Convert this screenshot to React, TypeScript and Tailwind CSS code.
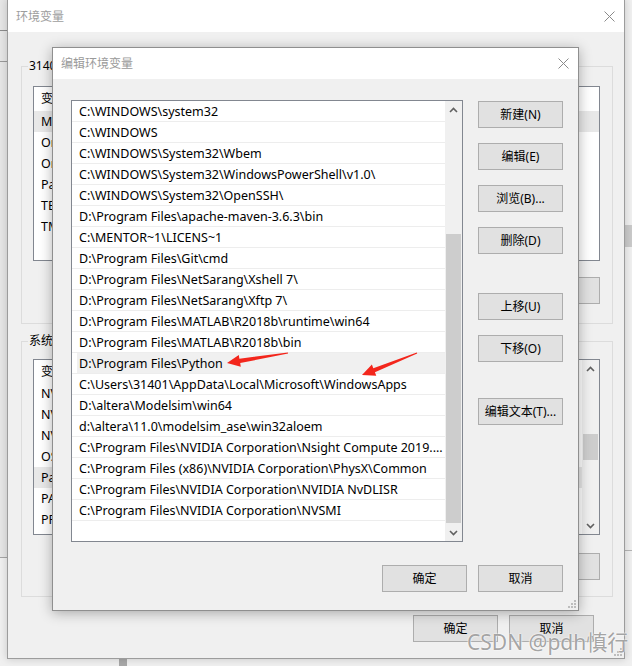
import React from "react";

const paths = [
  "C:\\WINDOWS\\system32",
  "C:\\WINDOWS",
  "C:\\WINDOWS\\System32\\Wbem",
  "C:\\WINDOWS\\System32\\WindowsPowerShell\\v1.0\\",
  "C:\\WINDOWS\\System32\\OpenSSH\\",
  "D:\\Program Files\\apache-maven-3.6.3\\bin",
  "C:\\MENTOR~1\\LICENS~1",
  "D:\\Program Files\\Git\\cmd",
  "D:\\Program Files\\NetSarang\\Xshell 7\\",
  "D:\\Program Files\\NetSarang\\Xftp 7\\",
  "D:\\Program Files\\MATLAB\\R2018b\\runtime\\win64",
  "D:\\Program Files\\MATLAB\\R2018b\\bin",
  "D:\\Program Files\\Python",
  "C:\\Users\\31401\\AppData\\Local\\Microsoft\\WindowsApps",
  "D:\\altera\\Modelsim\\win64",
  "d:\\altera\\11.0\\modelsim_ase\\win32aloem",
  "C:\\Program Files\\NVIDIA Corporation\\Nsight Compute 2019....",
  "C:\\Program Files (x86)\\NVIDIA Corporation\\PhysX\\Common",
  "C:\\Program Files\\NVIDIA Corporation\\NVIDIA NvDLISR",
  "C:\\Program Files\\NVIDIA Corporation\\NVSMI",
];

const userVars = [
  ["MOZ_PLUGIN_PATH", "D:\\Program Files\\Foxit Software\\plugins\\"],
  ["OneDrive", "C:\\Users\\31401\\OneDrive"],
  ["OneDriveConsumer", "C:\\Users\\31401\\OneDrive"],
  ["Path", "C:\\Users\\31401\\AppData\\Local\\Microsoft\\WindowsApps"],
  ["TEMP", "C:\\Users\\31401\\AppData\\Local\\Temp"],
  ["TMP", "C:\\Users\\31401\\AppData\\Local\\Temp"],
];

const sysVars = [
  ["NVCUDASAMPLES_ROOT", "C:\\ProgramData\\NVIDIA Corporation\\CUDA Samples"],
  ["NVCUDASAMPLES11_0_ROOT", "C:\\ProgramData\\NVIDIA Corporation\\CUDA Samples"],
  ["NVTOOLSEXT_PATH", "C:\\Program Files\\NVIDIA Corporation\\NvToolsExt\\"],
  ["OS", "Windows_NT"],
  ["Path", "C:\\WINDOWS\\system32;C:\\WINDOWS;"],
  ["PATHEXT", ".COM;.EXE;.BAT;.CMD;.VBS;.VBE;.JS"],
  ["PROCESSOR_ARCHITECTURE", "AMD64"],
];

function WinButton({ children, className = "" }: { children: React.ReactNode; className?: string }) {
  return (
    <div
      className={`h-[27px] w-[85px] shrink-0 flex items-center justify-center border border-[#adadad] bg-[#e1e1e1] ${className}`}
    >
      {children}
    </div>
  );
}

function CloseX() {
  return (
    <svg width="11" height="11" viewBox="0 0 11 11">
      <path d="M0.5 0.5 L10.5 10.5 M10.5 0.5 L0.5 10.5" stroke="#8a8a8a" strokeWidth="1" fill="none" />
    </svg>
  );
}

function Chevron({ up }: { up?: boolean }) {
  return (
    <svg width="9" height="6" viewBox="0 0 9 6">
      <polyline
        points={up ? "1,5 4.5,1.5 8,5" : "1,1 4.5,4.5 8,1"}
        fill="none"
        stroke="#606060"
        strokeWidth="1.6"
      />
    </svg>
  );
}

function Grip() {
  const dots = [
    [6, 0],
    [3, 3],
    [6, 3],
    [0, 6],
    [3, 6],
    [6, 6],
  ];
  return (
    <svg width="8" height="8">
      {dots.map(([x, y]) => (
        <rect key={`${x}-${y}`} x={x} y={y} width="2" height="2" fill="#bdbdbd" />
      ))}
    </svg>
  );
}

function Group({ label, children, className = "" }: { label: string; children: React.ReactNode; className?: string }) {
  return (
    <div className={`relative w-[592px] border border-[#dcdcdc] ${className}`}>
      <span className="absolute left-[6px] top-[-9px] bg-[#f0f0f0] px-[1px] leading-[16px]">{label}</span>
      {children}
    </div>
  );
}

function VarList({
  rows,
  selected,
  headerH,
  scroll,
  className = "",
}: {
  rows: string[][];
  selected: number;
  headerH: string;
  scroll?: boolean;
  className?: string;
}) {
  return (
    <div className={`ml-[11px] w-[567px] flex border border-[#828790] bg-white ${className}`}>
      <div className="flex-1 flex flex-col overflow-hidden">
        <div className={`${headerH} shrink-0 flex items-center`}>
          <span className="w-[160px] pl-[7px]">变量</span>
          <span className="pl-[7px]">值</span>
        </div>
        {rows.map(([k, v], i) => (
          <div
            key={k}
            className={`h-[21px] shrink-0 flex items-center pt-[2px] whitespace-nowrap text-[12.5px] ${
              i === selected ? "bg-[#e8e8e8]" : ""
            }`}
          >
            <span className="w-[160px] pl-[7px] overflow-hidden">{k}</span>
            <span className="pl-[7px]">{v}</span>
          </div>
        ))}
      </div>
      {scroll && (
        <div className="w-[17px] shrink-0 flex flex-col bg-[#f0f0f0]">
          <div className="h-[17px] flex items-center justify-center">
            <Chevron up />
          </div>
          <div className="flex-1 px-[1px]">
            <div className="mt-[57px] h-[26px] bg-[#cdcdcd]" />
          </div>
          <div className="h-[17px] flex items-center justify-center">
            <Chevron />
          </div>
        </div>
      )}
    </div>
  );
}

export default function App() {
  return (
    <div className="relative w-[632px] h-[666px] overflow-hidden bg-[#f0f0f0] font-['Noto_Sans','Noto_Sans_CJK_SC',sans-serif] text-[12px] text-black">
      {/* bits of other windows behind */}
      <div className="absolute left-0 top-0 w-[8px] h-[558px] bg-[#e6e6e6] border-b border-[#a5a5a5]">
        <div className="mt-[30px] h-px bg-[#8c8c8c]" />
        <div className="mt-[30px] h-px bg-[#9a9a9a]" />
      </div>
      <div className="absolute right-0 top-[225px] w-[8px] h-[22px] bg-[#cacaca]" />
      <div className="absolute right-0 top-[550px] w-[8px] h-px bg-[#b5b5b5]" />
      <div className="absolute left-[119px] bottom-0 w-[8px] h-[8px] bg-[#a8a8a8]" />

      {/* 环境变量 window */}
      <div className="absolute left-[7px] top-[-1px] w-[618px] h-[660px] border border-[#9c9c9c] bg-[#f0f0f0] shadow-[0_0_8px_rgba(0,0,0,0.18)] flex flex-col">
        <div className="h-[32px] shrink-0 bg-white flex items-center justify-between pl-[8px] pr-[9px] pt-[1px]">
          <span className="text-[#9d9d9d]">环境变量</span>
          <CloseX />
        </div>
        <div className="flex flex-col pl-[13px]">
          <Group label="31401 的用户变量(U)" className="mt-[34px] pb-[19px]">
            <VarList rows={userVars} selected={0} headerH="h-[24px]" className="mt-[19px] h-[175px]" />
            <div className="mt-[16px] flex justify-end gap-[10px] pr-[12px]">
              <WinButton>新建(N)...</WinButton>
              <WinButton>编辑(E)...</WinButton>
              <WinButton>删除(D)</WinButton>
            </div>
          </Group>
          <Group label="系统变量(S)" className="mt-[17px] pb-[16px]">
            <VarList rows={sysVars} selected={4} headerH="h-[23px]" scroll className="mt-[17px] h-[176px]" />
            <div className="mt-[18px] flex justify-end gap-[10px] pr-[12px]">
              <WinButton>新建(W)...</WinButton>
              <WinButton>编辑(I)...</WinButton>
              <WinButton>删除(L)</WinButton>
            </div>
          </Group>
        </div>
        <div className="mt-[18px] flex justify-end gap-[11px] pr-[30px]">
          <WinButton>确定</WinButton>
          <WinButton>取消</WinButton>
        </div>
        <div className="absolute right-[2px] bottom-[2px]">
          <Grip />
        </div>
      </div>

      {/* 编辑环境变量 dialog */}
      <div className="absolute left-[52px] top-[47px] w-[527px] h-[564px] border border-[#8f8f8f] bg-[#f0f0f0] shadow-[0_2px_12px_rgba(0,0,0,0.3)] flex flex-col">
        <div className="h-[31px] shrink-0 bg-white flex items-center justify-between pl-[8px] pr-[9px]">
          <span className="text-[#9a9a9a]">编辑环境变量</span>
          <CloseX />
        </div>
        <div className="flex flex-col pl-[18px] pr-[15px] pt-[21px]">
          <div className="flex gap-[15px]">
            <div className="w-[392px] h-[442px] flex border border-[#828790] bg-white">
              <div className="flex-1 flex flex-col overflow-hidden">
                {paths.map((p, i) => (
                  <div key={p} className="h-[21px] shrink-0 flex border-b border-[#ededed]">
                    <div
                      className={`ml-[5px] flex-1 pl-[2px] pt-[3px] flex items-center whitespace-nowrap overflow-hidden text-[12.5px] ${
                        i === 12 ? "bg-[#f0f0f0]" : ""
                      }`}
                    >
                      {p}
                    </div>
                  </div>
                ))}
              </div>
              <div className="w-[17px] shrink-0 flex flex-col bg-[#f0f0f0]">
                <div className="h-[17px] flex items-center justify-center">
                  <Chevron up />
                </div>
                <div className="flex-1 px-[1px]">
                  <div className="mt-[116px] h-[289px] bg-[#cdcdcd]" />
                </div>
                <div className="h-[17px] flex items-center justify-center">
                  <Chevron />
                </div>
              </div>
            </div>
            <div className="flex flex-col pt-[1px]">
              <WinButton>新建(N)</WinButton>
              <WinButton className="mt-[15px]">编辑(E)</WinButton>
              <WinButton className="mt-[15px]">浏览(B)...</WinButton>
              <WinButton className="mt-[15px]">删除(D)</WinButton>
              <WinButton className="mt-[39px]">上移(U)</WinButton>
              <WinButton className="mt-[15px]">下移(O)</WinButton>
              <WinButton className="mt-[36px]">编辑文本(T)...</WinButton>
            </div>
          </div>
          <div className="mt-[23px] flex justify-end gap-[11px]">
            <WinButton>确定</WinButton>
            <WinButton>取消</WinButton>
          </div>
        </div>
        <div className="absolute right-[2px] bottom-[2px]">
          <Grip />
        </div>
      </div>

      {/* red annotation arrows */}
      <svg className="absolute inset-0 pointer-events-none" width="632" height="666">
        <polygon
          points="227,363 240.8,366.8 240.2,363.1 288.1,353.6 287.9,352.4 239.4,358.7 238.8,355"
          fill="#f3261c"
        />
        <polygon
          points="362,375 376.3,375.8 374.9,372.2 417.2,353.6 416.8,352.4 373.3,368.2 371.9,364.6"
          fill="#f3261c"
        />
      </svg>

      {/* watermark */}
      <div className="absolute left-[467px] top-[628px] text-[21px] leading-[28px] text-[rgba(140,140,140,0.8)] [text-shadow:0_0_1px_#fff,0_0_2px_#fff]">
        CSDN @pdh慎行
      </div>
    </div>
  );
}
